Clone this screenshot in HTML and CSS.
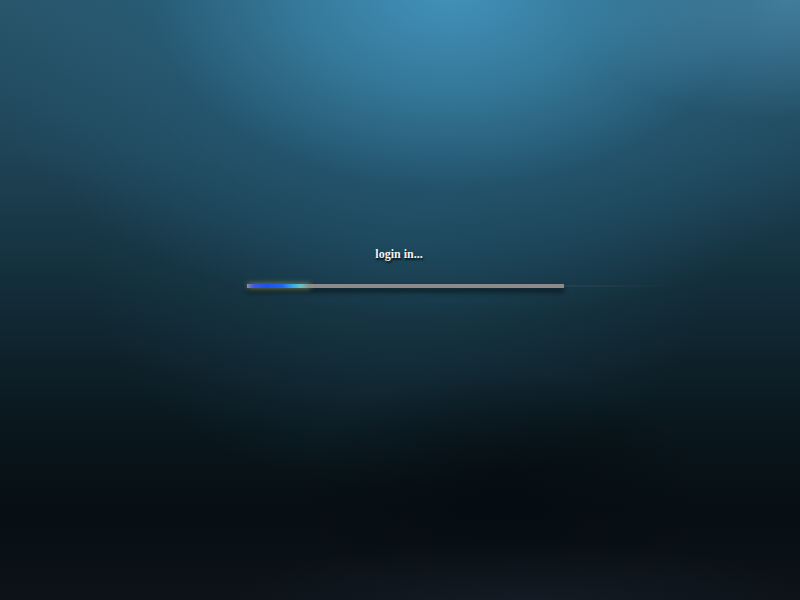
FILE: index.html
```html
<!DOCTYPE html>
<html>
<head>
<meta charset="utf-8">
<link rel="stylesheet" href="styles.css">
</head>
<body>
<div class="screen">
  <div class="loader">
    <div class="label">login in...</div>
    <div class="track">
      <div class="fill"></div>
    </div>
  </div>
</div>
</body>
</html>
```

FILE: styles.css
```css
html, body {
  margin: 0;
  padding: 0;
  width: 800px;
  height: 600px;
  overflow: hidden;
}
.screen {
  width: 800px;
  height: 600px;
  box-sizing: border-box;
  padding-top: 247px;
  background:
    radial-gradient(ellipse 300px 70px at 520px 610px, rgba(22,30,40,0.8), rgba(22,30,40,0) 100%),
    radial-gradient(ellipse 200px 120px at 500px 490px, rgba(4,10,14,0.6), rgba(4,10,14,0) 100%),
    radial-gradient(ellipse 220px 120px at 790px 0px, rgba(76,140,176,0.7), rgba(76,140,176,0) 100%),
    radial-gradient(ellipse 500px 330px at 450px -10px, rgba(66,146,186,1) 0%, rgba(56,128,164,0.85) 30%, rgba(40,98,128,0.5) 60%, rgba(30,70,90,0) 100%),
    radial-gradient(ellipse 330px 260px at 400px 230px, rgba(30,72,92,0.6) 0%, rgba(30,72,92,0) 100%),
    linear-gradient(180deg, #285468 0%, #1f4457 25%, #14303d 45%, #0e212a 60%, #09161c 72%, #070f14 85%, #0c1218 100%);
}
.loader {
  display: flex;
  flex-direction: column;
}
.label {
  font-family: "Liberation Serif", "Times New Roman", serif;
  font-weight: bold;
  font-size: 12px;
  line-height: 15px;
  color: #f2f2f2;
  text-align: center;
  padding-right: 2px;
  text-shadow: 1px 2px 2px rgba(0,0,0,0.8);
}
.track {
  margin-top: 22px;
  margin-left: 247px;
  width: 317px;
  height: 4px;
  background: #8c8a8a;
  position: relative;
  box-shadow: 0 4px 5px rgba(0,0,0,0.6);
}
.track::after {
  content: "";
  position: absolute;
  left: 317px;
  top: 1px;
  width: 110px;
  height: 2px;
  background: linear-gradient(90deg, rgba(60,80,90,0.35), rgba(60,80,90,0));
}
.fill {
  position: absolute;
  left: 1px;
  top: 0;
  width: 62px;
  height: 4px;
  border-radius: 2px;
  background: linear-gradient(90deg, #7a78c8 0%, #3a5ae0 10%, #1b52f2 30%, #1f66f0 55%, #3aa8e6 72%, #6ac0c8 85%, rgba(140,138,138,0) 100%);
  box-shadow: 0 0 5px 1px rgba(170,170,100,0.55);
}
```
